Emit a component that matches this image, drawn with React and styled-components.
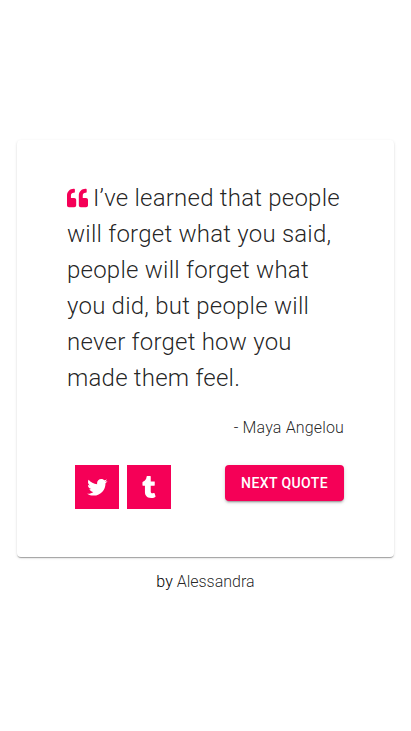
import React from "react";
import styled, { createGlobalStyle } from "styled-components";
import { FaQuoteLeft, FaTumblr } from "react-icons/fa";

const GlobalStyle = createGlobalStyle`
  *, *::before, *::after { box-sizing: border-box; }
  body {
    margin: 0;
    background: #fff;
    color: rgba(0, 0, 0, 0.87);
    font-family: Roboto, Helvetica, Arial, sans-serif;
    font-size: 16px;
    font-weight: 300;
    line-height: 24px;
    -webkit-font-smoothing: antialiased;
  }
`;

const Page = styled.main`
  min-height: 100vh;
  padding: 2px 17px 0;
  display: flex;
  flex-direction: column;
  align-items: center;
  justify-content: center;
`;

const Card = styled.section`
  width: 100%;
  max-width: 600px;
  padding: 40px 50px 48px;
  border-radius: 4px;
  background: #fff;
  box-shadow:
    0 2px 1px -1px rgba(0, 0, 0, 0.2),
    0 1px 1px 0 rgba(0, 0, 0, 0.14),
    0 1px 3px 0 rgba(0, 0, 0, 0.12);
`;

const Quote = styled.blockquote`
  margin: 0;
  font-size: 24px;
  line-height: 36px;
  letter-spacing: 0.00938em;
`;

const QuoteMark = styled(FaQuoteLeft)`
  width: 21px;
  height: 24px;
  margin-right: 5px;
  vertical-align: -4px;
  color: #f50057;
`;

const Author = styled.p`
  margin: 20px 0 25px;
  text-align: right;
  letter-spacing: 0.00938em;
`;

const Actions = styled.div`
  display: flex;
  align-items: flex-start;
  justify-content: space-between;
`;

const Share = styled.nav`
  display: flex;
  gap: 8px;
  padding-left: 8px;
`;

const ShareLink = styled.a`
  width: 44px;
  height: 44px;
  display: flex;
  align-items: center;
  justify-content: center;
  background: #f50057;
  color: #fff;
  font-size: 22px;
`;

const Bird = styled.svg`
  width: 44px;
  height: 44px;
  fill: currentColor;
`;

const NextButton = styled.button`
  padding: 6px 16px;
  border: 0;
  border-radius: 4px;
  background: #f50057;
  color: #fff;
  font: 500 14px/24px Roboto, Helvetica, Arial, sans-serif;
  letter-spacing: 0.02857em;
  text-transform: uppercase;
  cursor: pointer;
  box-shadow:
    0 3px 1px -2px rgba(0, 0, 0, 0.2),
    0 2px 2px 0 rgba(0, 0, 0, 0.14),
    0 1px 5px 0 rgba(0, 0, 0, 0.12);
`;

const Footer = styled.footer`
  margin-top: 13px;
  color: #000;
`;

const FooterLink = styled.a`
  color: rgba(0, 0, 0, 0.87);
  text-decoration: none;
`;

export default function App() {
  return (
    <>
      <GlobalStyle />
      <Page>
        <Card>
          <Quote>
            <QuoteMark aria-hidden="true" />
            I’ve learned that people will forget what you said, people will
            forget what you did, but people will never forget how you made them
            feel.
          </Quote>
          <Author>- Maya Angelou</Author>
          <Actions>
            <Share aria-label="Share">
              <ShareLink href="#twitter" aria-label="Share on Twitter">
                <Bird viewBox="-3 -3 69 69" aria-hidden="true">
                  <path d="M48,22.1c-1.2,0.5-2.4,0.9-3.8,1c1.4-0.8,2.4-2.1,2.9-3.6c-1.3,0.8-2.7,1.3-4.2,1.6C41.7,19.8,40,19,38.2,19c-3.6,0-6.6,2.9-6.6,6.6c0,0.5,0.1,1,0.2,1.5c-5.5-0.3-10.3-2.9-13.5-6.9c-0.6,1-0.9,2.1-0.9,3.3c0,2.3,1.2,4.3,2.9,5.5c-1.1,0-2.1-0.3-3-0.8v0.1c0,3.2,2.3,5.8,5.3,6.4c-0.6,0.1-1.1,0.2-1.7,0.2c-0.4,0-0.8,0-1.2-0.1c0.8,2.6,3.3,4.5,6.1,4.6c-2.2,1.8-5.1,2.8-8.2,2.8c-0.5,0-1.1,0-1.6-0.1C18.9,44,22.4,45,26.1,45c12.1,0,18.7-10,18.7-18.7v-0.8C46,24.5,47.1,23.4,48,22.1z" />
                </Bird>
              </ShareLink>
              <ShareLink href="#tumblr" aria-label="Share on Tumblr">
                <FaTumblr />
              </ShareLink>
            </Share>
            <NextButton type="button">Next quote</NextButton>
          </Actions>
        </Card>
        <Footer>
          by <FooterLink href="#alessandra">Alessandra</FooterLink>
        </Footer>
      </Page>
    </>
  );
}
